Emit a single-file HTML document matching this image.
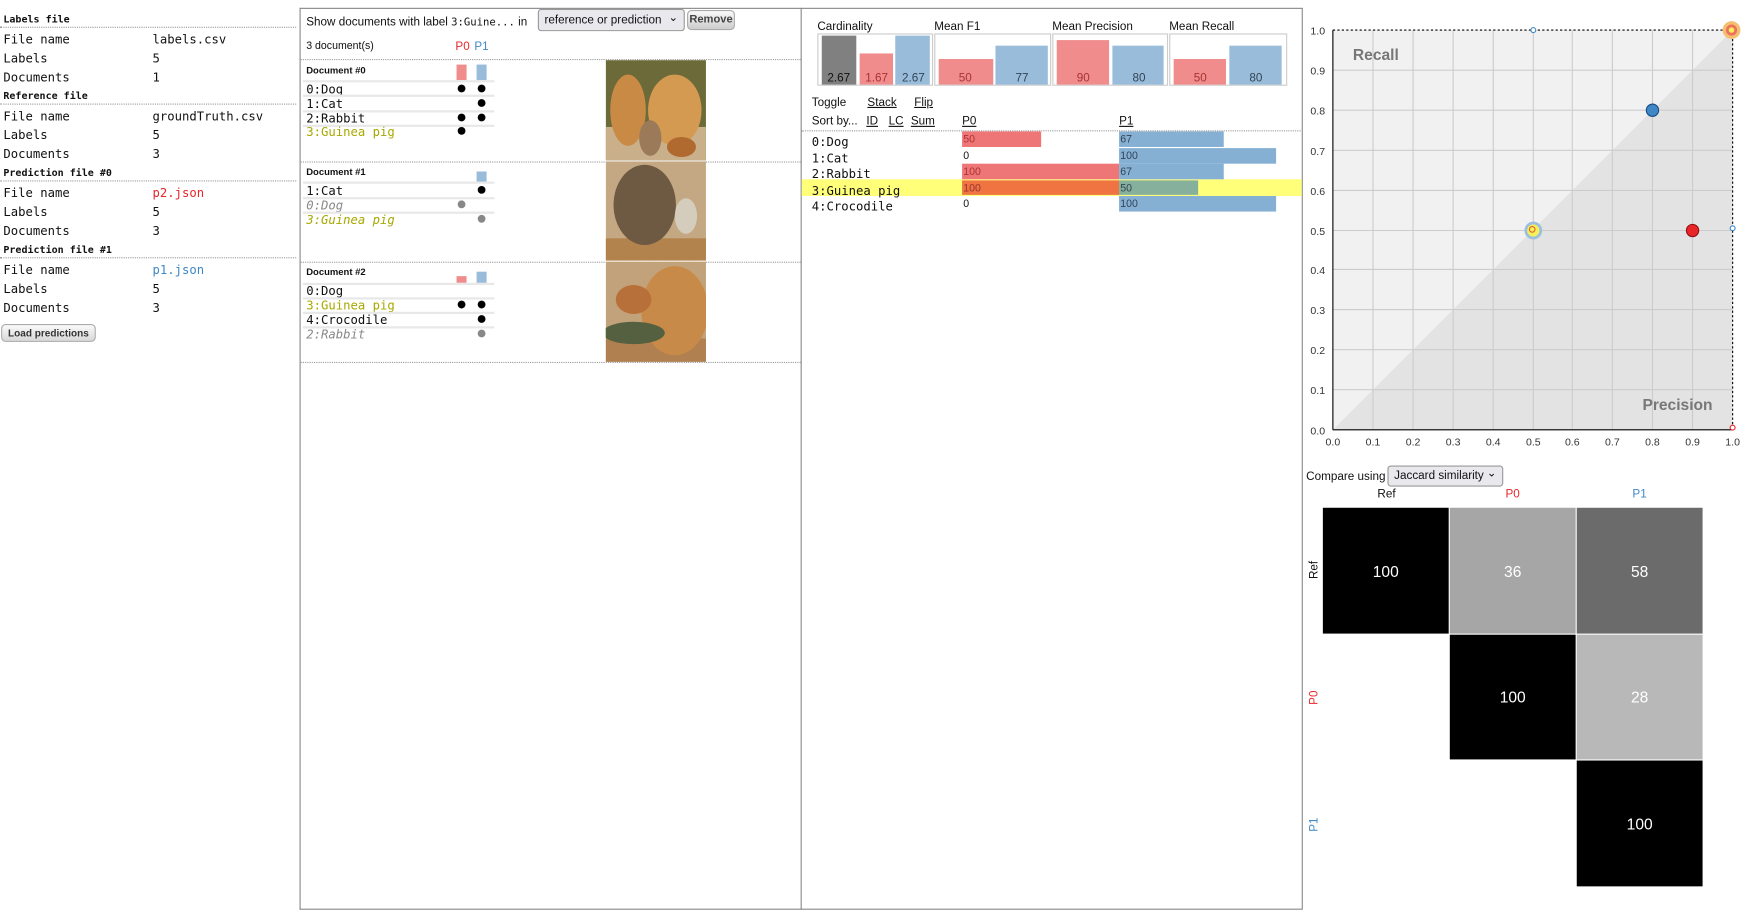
<!DOCTYPE html>
<html><head><meta charset="utf-8">
<style>
html,body{margin:0;padding:0;background:#fff;overflow:hidden;width:1746px;height:915px}
#w{position:absolute;left:0;top:0;width:1568px;height:822px;transform:scale(1.11352);transform-origin:0 0;font-family:"Liberation Sans","DejaVu Sans",sans-serif;font-size:10.5px;color:#111}
.a{position:absolute;white-space:nowrap;box-sizing:border-box}
.t{padding-top:2px}
.m{font-family:"DejaVu Sans Mono","Liberation Mono",monospace;font-size:11px;padding-top:2px}
.h{font-family:"DejaVu Sans Mono","Liberation Mono",monospace;font-size:9px;font-weight:bold;padding-top:2px}
.dl{position:absolute;border-top:1px dotted #999;height:0}
.sep{position:absolute;height:2px;background:#e8e8e8}
.dot{position:absolute;width:7px;height:7px;border-radius:50%;background:#000}
.g{background:#888}
.u{text-decoration:underline}
.cell{position:absolute;color:#fff;font-size:14px;display:flex;align-items:center;justify-content:center}
</style></head><body><div id="w">
<!-- left panel -->
<div class="a h" style="left:3px;top:11px">Labels file</div>
<div class="dl" style="left:0;width:266px;top:24px"></div>
<div class="a m" style="left:3px;top:27px">File name</div><div class="a m" style="left:137px;top:27px">labels.csv</div>
<div class="a m" style="left:3px;top:44px">Labels</div><div class="a m" style="left:137px;top:44px">5</div>
<div class="a m" style="left:3px;top:61px">Documents</div><div class="a m" style="left:137px;top:61px">1</div>
<div class="a h" style="left:3px;top:80px">Reference file</div>
<div class="dl" style="left:0;width:266px;top:93px"></div>
<div class="a m" style="left:3px;top:96px">File name</div><div class="a m" style="left:137px;top:96px">groundTruth.csv</div>
<div class="a m" style="left:3px;top:113px">Labels</div><div class="a m" style="left:137px;top:113px">5</div>
<div class="a m" style="left:3px;top:130px">Documents</div><div class="a m" style="left:137px;top:130px">3</div>
<div class="a h" style="left:3px;top:149px">Prediction file #0</div>
<div class="dl" style="left:0;width:266px;top:162px"></div>
<div class="a m" style="left:3px;top:165px">File name</div><div class="a m" style="left:137px;top:165px;color:#e8262a">p2.json</div>
<div class="a m" style="left:3px;top:182px">Labels</div><div class="a m" style="left:137px;top:182px">5</div>
<div class="a m" style="left:3px;top:199px">Documents</div><div class="a m" style="left:137px;top:199px">3</div>
<div class="a h" style="left:3px;top:218px">Prediction file #1</div>
<div class="dl" style="left:0;width:266px;top:231px"></div>
<div class="a m" style="left:3px;top:234px">File name</div><div class="a m" style="left:137px;top:234px;color:#3f88c5">p1.json</div>
<div class="a m" style="left:3px;top:251px">Labels</div><div class="a m" style="left:137px;top:251px">5</div>
<div class="a m" style="left:3px;top:268px">Documents</div><div class="a m" style="left:137px;top:268px">3</div>
<div class="a" style="left:1px;top:291px;width:85px;height:16px;border:1px solid #aaa;border-radius:4px;background:linear-gradient(#fafafa,#d8d8d8);font-size:9px;font-weight:bold;text-align:center;line-height:14px;color:#333">Load predictions</div>

<!-- middle panel -->
<div class="a" style="left:269px;top:7px;width:451px;height:810px;border:1px solid #888;border-right:none"></div>
<div class="a" style="left:719px;top:7px;width:451px;height:810px;border:1px solid #888"></div>
<div class="a t" style="left:275px;top:12px">Show documents with label <span style="font-family:'DejaVu Sans Mono',monospace;font-size:9.5px">3:Guine...</span> in</div>
<div class="a" style="left:483px;top:8px;width:132px;height:20px;border:1px solid #999;border-radius:3px;background:#e9e9ed;line-height:18px;padding-left:5px">reference or prediction <span style="position:absolute;right:5px;top:-2px">⌄</span></div>
<div class="a" style="left:617px;top:9px;width:43px;height:18px;border:1px solid #aaa;border-radius:4px;background:linear-gradient(#fafafa,#ccc);font-weight:bold;font-size:10px;line-height:16px;text-align:center;color:#444">Remove</div>
<div class="a t" style="left:275px;top:34px;font-size:9.5px">3 document(s)</div>
<div class="a t" style="left:409px;top:34px;color:#e8262a">P0</div><div class="a t" style="left:426px;top:34px;color:#3f88c5">P1</div>
<div class="dl" style="left:270px;width:449px;top:53px"></div>
<div class="dl" style="left:270px;width:449px;top:145px"></div>
<div class="dl" style="left:270px;width:449px;top:235px"></div>
<div class="dl" style="left:270px;width:449px;top:325px"></div>

<!-- doc 0 -->
<div class="a h" style="left:275px;top:56px;font-family:'Liberation Sans',sans-serif;font-size:8.5px">Document #0</div>
<div class="a" style="left:410px;top:58px;width:9px;height:14px;background:#f08c8c"></div>
<div class="a" style="left:428px;top:58px;width:9px;height:14px;background:#99bcdb"></div>
<div class="sep" style="left:272px;width:172px;top:72px"></div>
<div class="a m" style="left:275px;top:72px">0:Dog</div><div class="dot" style="left:411px;top:76px"></div><div class="dot" style="left:429px;top:76px"></div>
<div class="sep" style="left:272px;width:172px;top:85px"></div>
<div class="a m" style="left:275px;top:85px">1:Cat</div><div class="dot" style="left:429px;top:89px"></div>
<div class="sep" style="left:272px;width:172px;top:99px"></div>
<div class="a m" style="left:275px;top:98px">2:Rabbit</div><div class="dot" style="left:411px;top:102px"></div><div class="dot" style="left:429px;top:102px"></div>
<div class="sep" style="left:272px;width:172px;top:112px"></div>
<div class="a m" style="left:275px;top:110px;color:#a8a800">3:Guinea pig</div><div class="dot" style="left:411px;top:114px"></div>
<!-- doc 1 -->
<div class="a h" style="left:275px;top:147px;font-family:'Liberation Sans',sans-serif;font-size:8.5px">Document #1</div>
<div class="a" style="left:428px;top:154px;width:9px;height:9px;background:#99bcdb"></div>
<div class="sep" style="left:272px;width:172px;top:163px"></div>
<div class="a m" style="left:275px;top:163px">1:Cat</div><div class="dot" style="left:429px;top:167px"></div>
<div class="sep" style="left:272px;width:172px;top:177px"></div>
<div class="a m" style="left:275px;top:176px;color:#888;font-style:italic">0:Dog</div><div class="dot g" style="left:411px;top:180px"></div>
<div class="sep" style="left:272px;width:172px;top:190px"></div>
<div class="a m" style="left:275px;top:189px;color:#a8a800;font-style:italic">3:Guinea pig</div><div class="dot g" style="left:429px;top:193px"></div>
<!-- doc 2 -->
<div class="a h" style="left:275px;top:237px;font-family:'Liberation Sans',sans-serif;font-size:8.5px">Document #2</div>
<div class="a" style="left:410px;top:248px;width:9px;height:6px;background:#f08c8c"></div>
<div class="a" style="left:428px;top:244px;width:9px;height:10px;background:#99bcdb"></div>
<div class="sep" style="left:272px;width:172px;top:254px"></div>
<div class="a m" style="left:275px;top:253px">0:Dog</div>
<div class="sep" style="left:272px;width:172px;top:267px"></div>
<div class="a m" style="left:275px;top:266px;color:#a8a800">3:Guinea pig</div><div class="dot" style="left:411px;top:270px"></div><div class="dot" style="left:429px;top:270px"></div>
<div class="sep" style="left:272px;width:172px;top:280px"></div>
<div class="a m" style="left:275px;top:279px">4:Crocodile</div><div class="dot" style="left:429px;top:283px"></div>
<div class="sep" style="left:272px;width:172px;top:293px"></div>
<div class="a m" style="left:275px;top:292px;color:#888;font-style:italic">2:Rabbit</div><div class="dot g" style="left:429px;top:296px"></div>

<!-- images -->
<svg class="a" style="left:544px;top:54px" width="90" height="271" viewBox="0 0 90 271">
<rect x="0" y="0" width="90" height="90" fill="#6d6a3a"/>
<rect x="0" y="60" width="90" height="30" fill="#c9b08a"/>
<ellipse cx="20" cy="45" rx="16" ry="32" fill="#c98a45"/>
<ellipse cx="62" cy="45" rx="24" ry="32" fill="#d49a52"/>
<ellipse cx="40" cy="70" rx="10" ry="16" fill="#9b7a5a"/>
<ellipse cx="68" cy="78" rx="13" ry="9" fill="#b06a30"/>
<rect x="0" y="91" width="90" height="89" fill="#c4a883"/>
<rect x="0" y="160" width="90" height="20" fill="#b2834c"/>
<ellipse cx="35" cy="130" rx="28" ry="36" fill="#6e5a42"/>
<ellipse cx="72" cy="140" rx="10" ry="16" fill="#d8d4cc" opacity=".8"/>
<rect x="0" y="181" width="90" height="90" fill="#c2a27a"/>
<rect x="0" y="250" width="90" height="21" fill="#b08050"/>
<ellipse cx="62" cy="225" rx="30" ry="40" fill="#c88a48"/>
<ellipse cx="25" cy="215" rx="16" ry="13" fill="#b8703a"/>
<ellipse cx="25" cy="245" rx="28" ry="10" fill="#556040"/>
</svg>

<!-- stats -->
<div class="a t" style="left:734px;top:16px">Cardinality</div>
<div class="a t" style="left:839px;top:16px">Mean F1</div>
<div class="a t" style="left:945px;top:16px">Mean Precision</div>
<div class="a t" style="left:1050px;top:16px">Mean Recall</div>
<div class="a" style="left:734px;top:30px;width:104px;height:47px;border:1px solid #ccc"></div>
<div class="a" style="left:839px;top:30px;width:105px;height:47px;border:1px solid #ccc"></div>
<div class="a" style="left:945px;top:30px;width:104px;height:47px;border:1px solid #ccc"></div>
<div class="a" style="left:1050px;top:30px;width:106px;height:47px;border:1px solid #ccc"></div>
<div class="a" style="left:738px;top:32px;width:31px;height:44px;background:#808080"></div>
<div class="a" style="left:772px;top:48px;width:30px;height:28px;background:#f08c8c"></div>
<div class="a" style="left:804px;top:32px;width:31px;height:44px;background:#99bcdb"></div>
<div class="a" style="left:843px;top:53px;width:49px;height:23px;background:#f08c8c"></div>
<div class="a" style="left:894px;top:41px;width:47px;height:35px;background:#99bcdb"></div>
<div class="a" style="left:949px;top:36px;width:47px;height:40px;background:#f08c8c"></div>
<div class="a" style="left:999px;top:41px;width:46px;height:35px;background:#99bcdb"></div>
<div class="a" style="left:1054px;top:53px;width:47px;height:23px;background:#f08c8c"></div>
<div class="a" style="left:1104px;top:41px;width:47px;height:35px;background:#99bcdb"></div>
<div class="a t" style="left:743px;top:62px;color:#111">2.67</div>
<div class="a t" style="left:777px;top:62px;color:#a33">1.67</div>
<div class="a t" style="left:810px;top:62px;color:#345">2.67</div>
<div class="a t" style="left:861px;top:62px;color:#a33">50</div>
<div class="a t" style="left:912px;top:62px;color:#345">77</div>
<div class="a t" style="left:967px;top:62px;color:#a33">90</div>
<div class="a t" style="left:1017px;top:62px;color:#345">80</div>
<div class="a t" style="left:1072px;top:62px;color:#a33">50</div>
<div class="a t" style="left:1122px;top:62px;color:#345">80</div>
<div class="a t" style="left:729px;top:84px">Toggle</div>
<div class="a t u" style="left:779px;top:84px">Stack</div>
<div class="a t u" style="left:821px;top:84px">Flip</div>
<div class="a t" style="left:729px;top:101px">Sort by...</div>
<div class="a t u" style="left:778px;top:101px">ID</div>
<div class="a t u" style="left:798px;top:101px">LC</div>
<div class="a t u" style="left:818px;top:101px">Sum</div>
<div class="a t u" style="left:864px;top:101px">P0</div>
<div class="a t u" style="left:1005px;top:101px">P1</div>
<div class="dl" style="left:720px;width:448px;top:117px"></div>
<div class="a" style="left:720px;top:161px;width:449px;height:15px;background:#ffff7a"></div>
<div class="a m" style="left:729px;top:119px">0:Dog</div>
<div class="a m" style="left:729px;top:134px">1:Cat</div>
<div class="a m" style="left:729px;top:148px">2:Rabbit</div>
<div class="a m" style="left:729px;top:163px">3:Guinea pig</div>
<div class="a m" style="left:729px;top:177px">4:Crocodile</div>
<div class="a" style="left:864px;top:118px;width:71px;height:14px;background:#ee7676"></div>
<div class="a" style="left:864px;top:147px;width:141px;height:14px;background:#ee7676"></div>
<div class="a" style="left:864px;top:162px;width:141px;height:13px;background:#ef7442"></div>
<div class="a" style="left:1005px;top:118px;width:94px;height:14px;background:#86b0d3"></div>
<div class="a" style="left:1005px;top:133px;width:141px;height:14px;background:#86b0d3"></div>
<div class="a" style="left:1005px;top:147px;width:94px;height:14px;background:#86b0d3"></div>
<div class="a" style="left:1005px;top:162px;width:71px;height:13px;background:#86b09c"></div>
<div class="a" style="left:1005px;top:176px;width:141px;height:14px;background:#86b0d3"></div>
<div class="a t" style="left:865px;top:118px;font-size:9.5px;color:#a33">50</div>
<div class="a t" style="left:865px;top:133px;font-size:9.5px">0</div>
<div class="a t" style="left:865px;top:147px;font-size:9.5px;color:#a33">100</div>
<div class="a t" style="left:865px;top:162px;font-size:9.5px;color:#933">100</div>
<div class="a t" style="left:865px;top:176px;font-size:9.5px">0</div>
<div class="a t" style="left:1006px;top:118px;font-size:9.5px;color:#345">67</div>
<div class="a t" style="left:1006px;top:133px;font-size:9.5px;color:#345">100</div>
<div class="a t" style="left:1006px;top:147px;font-size:9.5px;color:#345">67</div>
<div class="a t" style="left:1006px;top:162px;font-size:9.5px;color:#345">50</div>
<div class="a t" style="left:1006px;top:176px;font-size:9.5px;color:#345">100</div>

<!-- plot -->
<svg class="a" style="left:1170px;top:0" width="398" height="410" viewBox="1170 0 398 410" font-family="Liberation Sans, sans-serif" font-size="9.5">
<rect x="1197" y="27" width="359" height="359" fill="#f1f1f1"/>
<polygon points="1197,386 1556,27 1556,386" fill="#e3e3e3"/>
<g stroke="#ccc" stroke-width="1">
<line x1="1233" y1="27" x2="1233" y2="386"/><line x1="1269" y1="27" x2="1269" y2="386"/><line x1="1305" y1="27" x2="1305" y2="386"/><line x1="1341" y1="27" x2="1341" y2="386"/><line x1="1377" y1="27" x2="1377" y2="386"/><line x1="1412" y1="27" x2="1412" y2="386"/><line x1="1448" y1="27" x2="1448" y2="386"/><line x1="1484" y1="27" x2="1484" y2="386"/><line x1="1520" y1="27" x2="1520" y2="386"/>
<line x1="1197" y1="63" x2="1556" y2="63"/><line x1="1197" y1="99" x2="1556" y2="99"/><line x1="1197" y1="135" x2="1556" y2="135"/><line x1="1197" y1="171" x2="1556" y2="171"/><line x1="1197" y1="207" x2="1556" y2="207"/><line x1="1197" y1="242" x2="1556" y2="242"/><line x1="1197" y1="278" x2="1556" y2="278"/><line x1="1197" y1="314" x2="1556" y2="314"/><line x1="1197" y1="350" x2="1556" y2="350"/>
</g>
<line x1="1197" y1="27" x2="1197" y2="386" stroke="#000"/><line x1="1197" y1="386" x2="1556" y2="386" stroke="#000"/>
<line x1="1197" y1="27" x2="1556" y2="27" stroke="#000" stroke-dasharray="2,2"/>
<line x1="1556" y1="27" x2="1556" y2="386" stroke="#000" stroke-dasharray="2,2"/>
<g fill="#333" text-anchor="end">
<text x="1190" y="31">1.0</text><text x="1190" y="67">0.9</text><text x="1190" y="103">0.8</text><text x="1190" y="139">0.7</text><text x="1190" y="175">0.6</text><text x="1190" y="211">0.5</text><text x="1190" y="246">0.4</text><text x="1190" y="282">0.3</text><text x="1190" y="318">0.2</text><text x="1190" y="354">0.1</text><text x="1190" y="390">0.0</text>
</g>
<g fill="#333" text-anchor="middle">
<text x="1197" y="400">0.0</text><text x="1233" y="400">0.1</text><text x="1269" y="400">0.2</text><text x="1305" y="400">0.3</text><text x="1341" y="400">0.4</text><text x="1377" y="400">0.5</text><text x="1412" y="400">0.6</text><text x="1448" y="400">0.7</text><text x="1484" y="400">0.8</text><text x="1520" y="400">0.9</text><text x="1556" y="400">1.0</text>
</g>
<text x="1215" y="54" font-size="14" font-weight="bold" fill="#777">Recall</text>
<text x="1475" y="368" font-size="14" font-weight="bold" fill="#777">Precision</text>
<circle cx="1377" cy="207" r="8" fill="#9cbfe0"/><circle cx="1377" cy="207" r="5.5" fill="#f4f05a"/><circle cx="1376" cy="206" r="2.5" fill="none" stroke="#e06030"/>
<circle cx="1484" cy="99" r="5.5" fill="#3f88c5" stroke="#1a4a80"/>
<circle cx="1520" cy="207" r="5.5" fill="#e8262a" stroke="#901010"/>
<circle cx="1555" cy="27" r="8" fill="#f4c070"/><circle cx="1555" cy="27" r="5" fill="#f07060"/><circle cx="1555" cy="27" r="2.5" fill="#f4f05a"/>
<circle cx="1377" cy="27" r="2.2" fill="#fff" stroke="#3f88c5"/>
<circle cx="1556" cy="205" r="2.2" fill="#fff" stroke="#3f88c5"/>
<circle cx="1556" cy="384" r="2.2" fill="#fff" stroke="#e8262a"/>
</svg>

<!-- compare -->
<div class="a t" style="left:1173px;top:420px">Compare using</div>
<div class="a" style="left:1246px;top:418px;width:104px;height:19px;border:1px solid #999;border-radius:3px;background:#e9e9ed;line-height:17px;padding-left:5px">Jaccard similarity <span style="position:absolute;right:5px;top:-2px">⌄</span></div>
<div class="a t" style="left:1237px;top:436px">Ref</div>
<div class="a t" style="left:1352px;top:436px;color:#e8262a">P0</div>
<div class="a t" style="left:1466px;top:436px;color:#3f88c5">P1</div>
<div class="a" style="left:1174px;top:520px;transform:rotate(-90deg);transform-origin:0 0">Ref</div>
<div class="a" style="left:1174px;top:633px;transform:rotate(-90deg);transform-origin:0 0;color:#e8262a">P0</div>
<div class="a" style="left:1174px;top:747px;transform:rotate(-90deg);transform-origin:0 0;color:#3f88c5">P1</div>
<div class="cell" style="left:1188px;top:456px;width:113px;height:113px;background:#000">100</div>
<div class="cell" style="left:1302px;top:456px;width:113px;height:113px;background:#a6a6a6">36</div>
<div class="cell" style="left:1416px;top:456px;width:113px;height:113px;background:#6b6b6b">58</div>
<div class="cell" style="left:1302px;top:570px;width:113px;height:112px;background:#000">100</div>
<div class="cell" style="left:1416px;top:570px;width:113px;height:112px;background:#b8b8b8">28</div>
<div class="cell" style="left:1416px;top:683px;width:113px;height:113px;background:#000">100</div>
</div></body></html>
